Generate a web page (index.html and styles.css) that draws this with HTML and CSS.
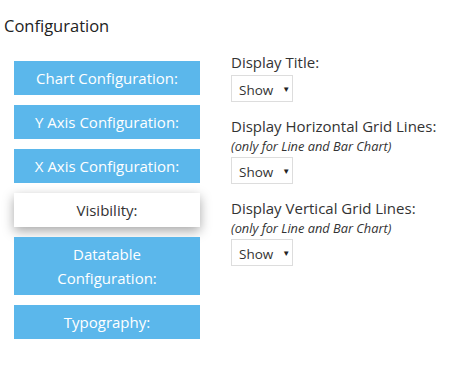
FILE: index.html
```html
<!DOCTYPE html>
<html lang="en">
<head>
    <meta charset="UTF-8">
    <title>Configuration</title>
    <link rel="stylesheet" href="styles.css">
</head>
<body>
    <h3 class="title">Configuration</h3>
    <div class="config">
        <div class="tabs">
            <div class="tab">Chart Configuration:</div>
            <div class="tab">Y Axis Configuration:</div>
            <div class="tab">X Axis Configuration:</div>
            <div class="tab active">Visibility:</div>
            <div class="tab tall">Datatable<br>Configuration:</div>
            <div class="tab">Typography:</div>
        </div>
        <div class="options">
            <div class="option">
                <label>Display Title:</label>
                <div class="select">Show<span class="arrow">&#9660;</span></div>
            </div>
            <div class="option">
                <label>Display Horizontal Grid Lines:</label>
                <small>(only for Line and Bar Chart)</small>
                <div class="select">Show<span class="arrow">&#9660;</span></div>
            </div>
            <div class="option">
                <label>Display Vertical Grid Lines:</label>
                <small>(only for Line and Bar Chart)</small>
                <div class="select">Show<span class="arrow">&#9660;</span></div>
            </div>
        </div>
    </div>
</body>
</html>
```

FILE: styles.css
```css
body {
    margin: 0;
    background: #fff;
    color: #333;
    font-family: "Open Sans", "Noto Sans", sans-serif;
}
.title {
    margin: 0;
    padding: 15px 0 0 4px;
    font-size: 16.5px;
    font-weight: normal;
    line-height: 22px;
    color: #222;
}
.config {
    display: flex;
    gap: 31px;
    padding: 24px 0 0 14px;
}
.tabs {
    display: flex;
    flex-direction: column;
    gap: 10px;
    width: 186px;
}
.tab {
    background: #5bb7eb;
    color: #fff;
    text-align: center;
    font-size: 15px;
    line-height: 34px;
    height: 34px;
}
.tab.tall {
    height: 58px;
    line-height: 24px;
    padding-top: 5px;
    box-sizing: border-box;
}
.tab.active {
    background: #fff;
    color: #333;
    box-shadow: 0 4px 12px rgba(0, 0, 0, 0.35);
}
.options {
    display: flex;
    flex-direction: column;
    gap: 13px;
    margin-top: -10px;
}
.option label {
    display: block;
    font-size: 15px;
    line-height: 22px;
}
.option small {
    display: block;
    font-size: 12.8px;
    font-style: italic;
    line-height: 18px;
}
.select {
    display: inline-block;
    width: 62px;
    height: 27px;
    box-sizing: border-box;
    border: 1px solid #ddd;
    padding-left: 7px;
    margin-top: 2px;
    font-size: 13.5px;
    line-height: 25px;
}
.arrow {
    font-size: 8px;
    vertical-align: 3px;
    margin-left: 9px;
    color: #222;
}
```
